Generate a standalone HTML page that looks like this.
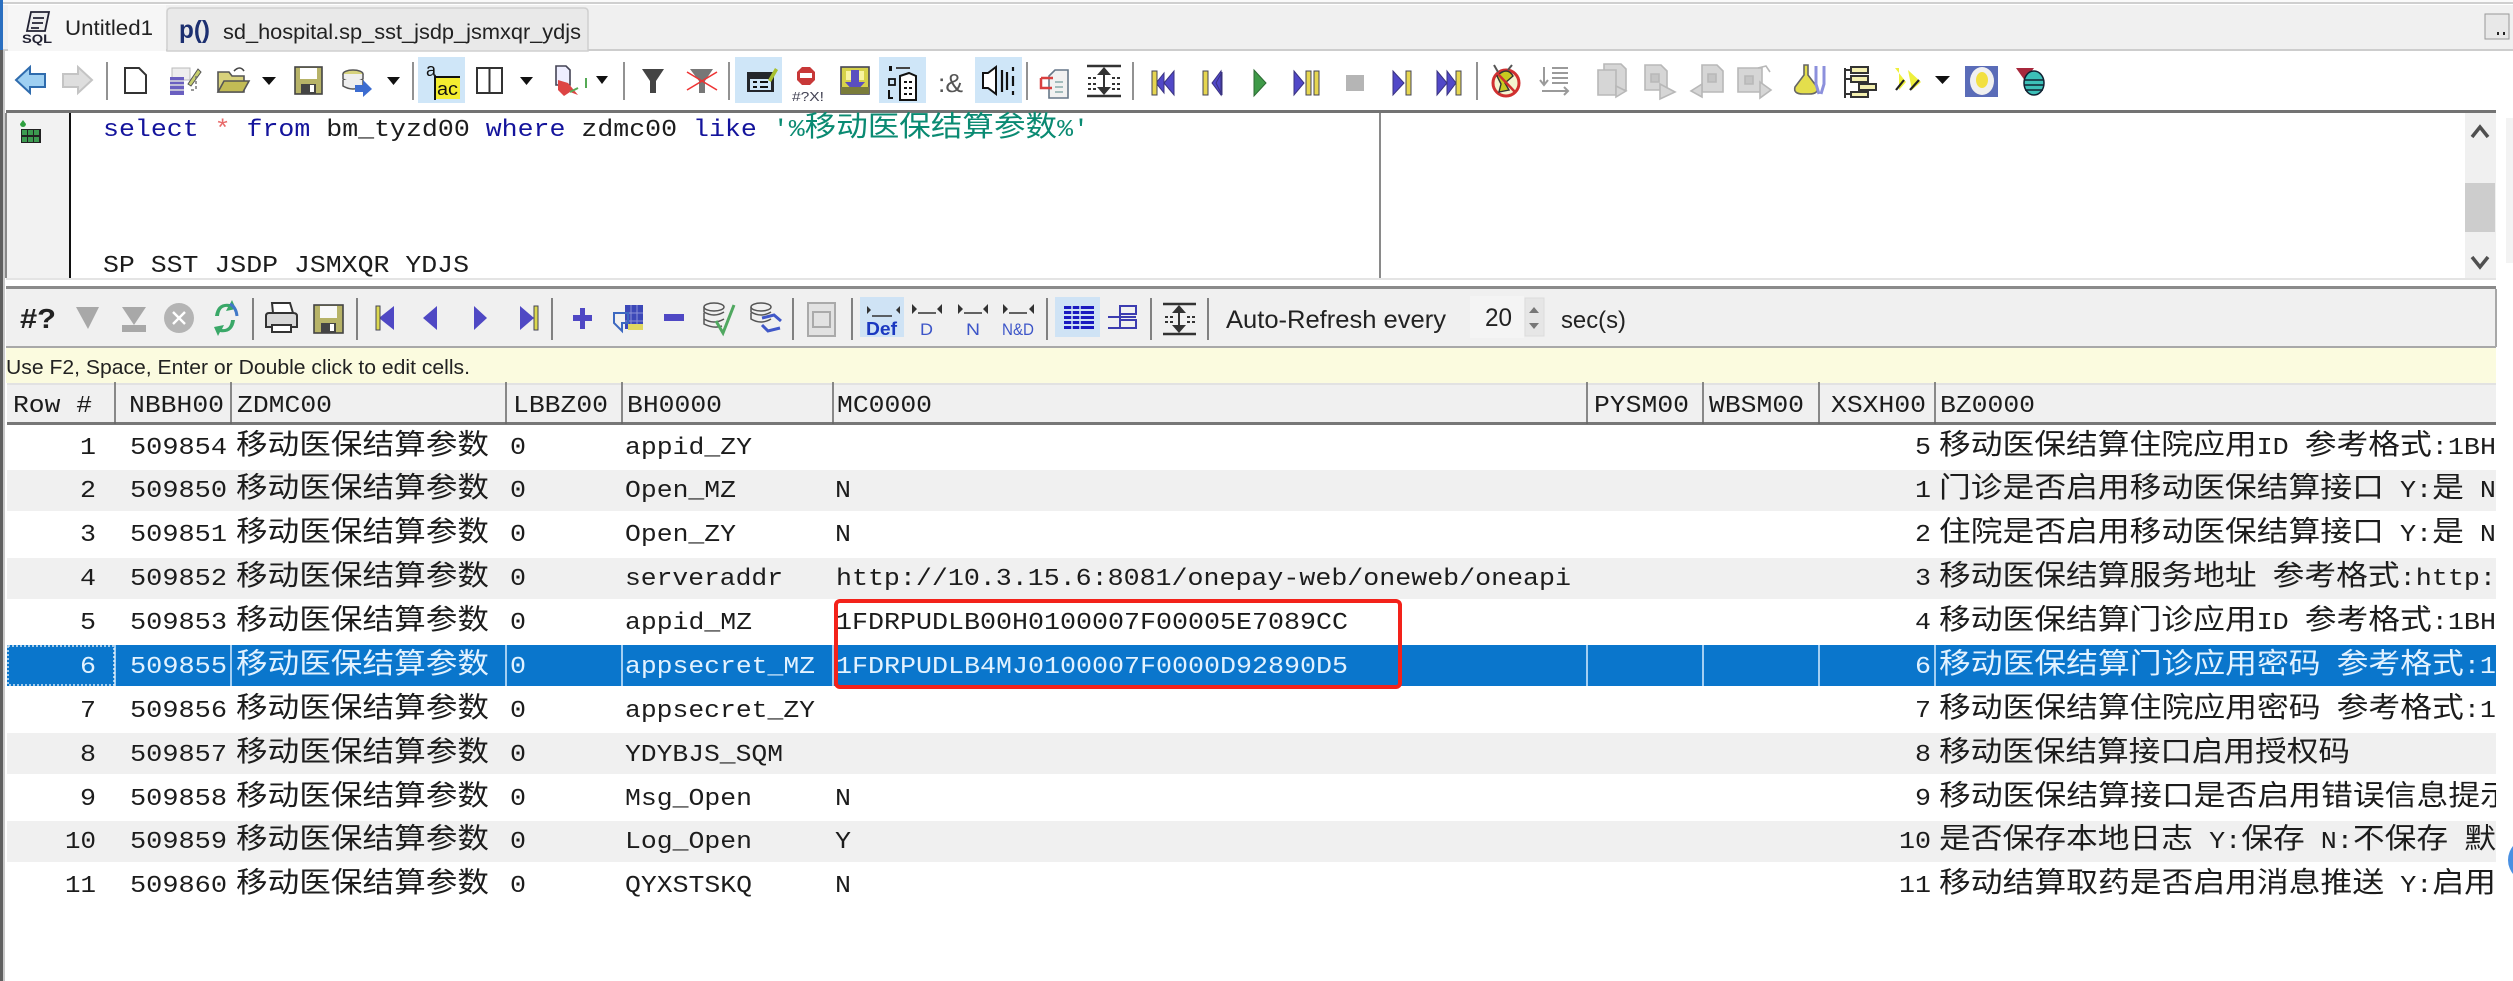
<!DOCTYPE html>
<html><head><meta charset="utf-8"><title>SQLyog</title>
<style>
html,body{margin:0;padding:0;background:#fff;width:2513px;height:981px;overflow:hidden}
svg{display:block}
text{white-space:pre}
.m{font-family:"Liberation Mono","Noto Sans CJK SC",monospace;font-size:24px;fill:#1c1c1c}
.s{font-family:"Liberation Sans","Noto Sans CJK SC",sans-serif;fill:#222}
.c{font-size:28.5px;font-family:"Noto Sans CJK SC",sans-serif}
.w{fill:#e2f2ff}
</style></head><body>
<svg xmlns="http://www.w3.org/2000/svg" width="2513" height="981" viewBox="0 0 2513 981">
<defs><clipPath id="bz"><rect x="1938" y="425" width="558" height="490"/></clipPath></defs>
<rect width="2513" height="981" fill="#fff"/>

<!-- tab bar -->
<rect x="0" y="0" width="2513" height="3" fill="#fafafa"/>
<rect x="0" y="2" width="2513" height="2" fill="#cfcfcf"/>
<rect x="0" y="5" width="2513" height="45" fill="#f0f0f0"/>
<rect x="0" y="49" width="2513" height="2" fill="#cdcdcd"/>
<rect x="8" y="5" width="158" height="46" fill="#f6f6f6"/>
<path d="M167 51V12q0-4 4-4h413q4 0 4 4v39z" fill="#e9e9e9" stroke="#cfcfcf" stroke-width="1.5"/>
<rect x="0" y="0" width="3" height="50" fill="#2a6fc0"/>
<!-- sql icon -->
<g fill="none" stroke="#223" stroke-width="1.8"><path d="M31 12h18l-4 19H27z" fill="#eee"/><path d="M33 18h11M32 23h11M31 28h8"/></g>
<text x="22" y="43" class="s" font-size="12" font-weight="bold" textLength="30" lengthAdjust="spacingAndGlyphs" style="fill:#223">SQL</text>
<text x="65" y="35" class="s" font-size="21" textLength="88" lengthAdjust="spacingAndGlyphs">Untitled1</text>
<text x="179" y="38" class="s" font-size="25" font-weight="bold" textLength="31" lengthAdjust="spacingAndGlyphs" style="fill:#1c2f70">p()</text>
<text x="223" y="39" class="s" font-size="21" textLength="358" lengthAdjust="spacingAndGlyphs">sd_hospital.sp_sst_jsdp_jsmxqr_ydjs</text>
<rect x="2485" y="14" width="24" height="25" fill="#e8e8e8" stroke="#999"/>
<path d="M2497 32h2v3h-2zM2503 32h2v3h-2z" fill="#222"/>

<!-- toolbar 1 active buttons -->
<rect x="418" y="57" width="47" height="46" fill="#cfe6f8"/>
<rect x="735" y="57" width="47" height="46" fill="#cfe6f8"/>
<rect x="879" y="57" width="47" height="46" fill="#cfe6f8"/>
<rect x="975" y="57" width="47" height="46" fill="#cfe6f8"/>
<!-- separators -->
<g stroke="#777" stroke-width="1.6">
<path d="M107 62v38M413 62v38M624 62v38M729 62v38M1027 62v38M1133 62v38M1477 62v38"/>
</g>
<!-- back/forward -->
<path d="M16 80L30 67V74H45V87H30V93z" fill="#9fd0f2" stroke="#2f6cae" stroke-width="2"/>
<path d="M92 80L78 67V74H63V87H78V93z" fill="#dedede" stroke="#c4c4c4" stroke-width="2"/>
<!-- new -->
<path d="M125 68h14l7 7v18h-21z" fill="#fff" stroke="#333" stroke-width="2"/>
<!-- sql file -->
<g><rect x="172" y="68" width="18" height="12" fill="#eee" stroke="#bbb"/><path d="M188 84l10-15 3 3-10 14z" fill="#c8d070" stroke="#555"/>
<rect x="170" y="77" width="14" height="18" fill="#6a5fc0"/><path d="M170 81h14M170 85h14M170 90h14" stroke="#ddd" stroke-width="1.5"/><path d="M196 76v14M191 90h5" fill="none" stroke="#777" stroke-width="1.5" stroke-dasharray="3 2"/></g>
<!-- open -->
<path d="M218 92V72h11l3 4h12v16z" fill="#d8d27c" stroke="#555" stroke-width="1.6"/><path d="M218 92l6-11h25l-6 11z" fill="#c2bb55" stroke="#555" stroke-width="1.6"/><path d="M234 71q6-6 10 0" fill="none" stroke="#444" stroke-width="1.6"/>
<!-- dropdowns -->
<g fill="#111"><path d="M262 77h14l-7 8zM387 77h13l-6.500 8zM520 77h13l-6.500 8zM596 76h12l-6 8z"/><path d="M1935 76h15l-7.500 8z"/></g>
<!-- save -->
<rect x="295" y="67" width="27" height="27" fill="#b7b368" stroke="#444" stroke-width="1.6"/><rect x="300" y="68" width="17" height="11" fill="#fff"/><rect x="301" y="84" width="15" height="10" fill="#444"/><rect x="310" y="85" width="4" height="7" fill="#fff"/>
<!-- db arrow -->
<g fill="#fff" stroke="#555" stroke-width="1.5"><ellipse cx="353" cy="74" rx="10" ry="4" fill="#d6d27e"/><path d="M343 74v5q10 6 20 0v-5" fill="#eee"/><path d="M343 80v6q10 6 20 0v-6" fill="#eee"/></g><path d="M355 85h8v-5l9 9-9 8v-5h-8z" fill="#3c6cd0"/>
<!-- word wrap a/ab -->
<text x="426" y="76" class="s" font-size="18" style="fill:#111">a</text><rect x="434" y="76" width="26" height="2" fill="#111"/><rect x="436" y="78" width="24" height="21" fill="#f4ee30"/><text x="437" y="95" class="s" font-size="18" textLength="21" lengthAdjust="spacingAndGlyphs" style="fill:#111">ac</text><rect x="434" y="78" width="2" height="22" fill="#111"/>
<!-- panel -->
<rect x="477" y="68" width="25" height="25" fill="#fff" stroke="#333" stroke-width="2"/><path d="M489.500 68v25" stroke="#333" stroke-width="2"/>
<!-- export -->
<path d="M556 66h10l4 4v15h-14z" fill="#eef" stroke="#445" stroke-width="1.6"/><path d="M558 80l10 3 10 12-8-3-6 4-6-6z" fill="#d44"/><path d="M570 92l8-4M586 78v10" stroke="#5a5" stroke-width="2"/>
<!-- filters -->
<path d="M642 69h22l-8 12v12h-6V81z" fill="#444"/>
<path d="M690 69h23l-8 12v12h-6V81z" fill="#777"/><path d="M687 72l30 18M717 72l-30 18" stroke="#e33" stroke-width="1.6"/>
<!-- active editor icon -->
<rect x="747" y="72" width="27" height="20" fill="#23262b"/><rect x="750" y="79" width="21" height="11" fill="#cfe6f8"/><path d="M753 82h4M760 82h8M753 87h4M760 87h8" stroke="#111" stroke-width="2"/><path d="M768 80l7-12 3 2-7 12z" fill="#a8c030"/>
<!-- stop #?X! -->
<path d="M802 67h8l5 5v8l-5 5h-8l-5-5v-8z" fill="#c83838"/><rect x="800" y="73" width="12" height="5" fill="#fff"/>
<text x="792" y="101" class="s" font-size="13" textLength="32" lengthAdjust="spacingAndGlyphs" style="fill:#445">#?X!</text>
<!-- down-yellow -->
<rect x="841" y="67" width="28" height="27" fill="#d6d24a" stroke="#445" stroke-width="1.6"/><rect x="846" y="71" width="18" height="9" fill="#f8f4a0"/><path d="M851 70h8v12h6l-10 11-10-11h6z" fill="#5a4ec0"/><rect x="841" y="87" width="28" height="7" fill="#7a7c3a"/>
<!-- active 2 -->
<rect x="889" y="66" width="3" height="5" fill="#111"/><rect x="896" y="67" width="14" height="2" fill="#444"/><rect x="889" y="79" width="6" height="6" fill="none" stroke="#111" stroke-width="1.800"/><path d="M889 90v8h4" fill="none" stroke="#111" stroke-width="2"/>
<path d="M900 76l9-3 7 3v24h-16z" fill="#fff" stroke="#111" stroke-width="2"/><path d="M904 82h8M904 88h8M904 94h8" stroke="#111" stroke-width="2" stroke-dasharray="3 2"/>
<text x="938" y="92" class="s" font-size="26" textLength="25" lengthAdjust="spacingAndGlyphs" style="fill:#555">:&amp;</text>
<!-- speaker -->
<path d="M983 73h5l8-6v27l-8-6h-5z" fill="#fff" stroke="#111" stroke-width="2"/><path d="M1002 70v22M1007 72v18M1013 67v4M1013 76v10M1013 91v4" stroke="#111" stroke-width="2.200" fill="none"/>
<!-- copy -->
<path d="M1055 70h13v28h-19V76z" fill="#f1f1f1" stroke="#678" stroke-width="1.6"/><path d="M1055 82h8M1055 87h8M1055 92h8" stroke="#8aa" stroke-width="1.500"/><path d="M1041 78h12M1041 78v10h11" fill="none" stroke="#d84040" stroke-width="2.500"/>
<!-- expand -->
<path d="M1087 66h34M1087 96h34" stroke="#333" stroke-width="2.500"/><path d="M1104 67l-7 8h14zM1104 95l-7-8h14z" fill="#333"/><path d="M1088 78h8M1112 78h8M1088 84h8M1112 84h8M1088 89h8M1112 89h8" stroke="#333" stroke-width="2" stroke-dasharray="3 2"/><path d="M1104 74v18" stroke="#333" stroke-width="2"/>
<!-- run controls -->
<g fill="#5148c8" stroke="#3a3380">
<path d="M1164 83l10-12v24zM1156 83l8-10v20z"/><path d="M1216 83l6-11v23z M1212 83l9-12v24z"/><path d="M1294 71l10 12-10 12z"/><path d="M1393 71l11 12-11 12z"/><path d="M1437 71l10 12-10 12zM1447 71l9 12-9 12z"/></g>
<g fill="#e6d650" stroke="#445"><rect x="1152" y="71" width="5" height="24"/><rect x="1203" y="71" width="5" height="24"/><rect x="1306" y="71" width="5" height="24"/><rect x="1314" y="71" width="5" height="24"/><rect x="1406" y="71" width="5" height="24"/><rect x="1456" y="71" width="5" height="24"/></g>
<path d="M1254 70l12 13-12 13z" fill="#3f9a48" stroke="#2c6b33"/>
<rect x="1346" y="75" width="18" height="16" fill="#b5b5b5"/>
<!-- bug -->
<circle cx="1506" cy="83" r="13" fill="#f4f4d0" stroke="#d03030" stroke-width="3"/><path d="M1498 72l-4-7M1508 70l4-5" stroke="#555" stroke-width="2"/><path d="M1497 76q10-10 16 0l-8 7 4 7-10 2 2-8z" fill="#c8c820" stroke="#333" stroke-width="1.400"/><path d="M1497 73l18 19" stroke="#d03030" stroke-width="2.500"/>
<!-- list -->
<g stroke="#9a9a9a" stroke-width="2" fill="none"><path d="M1552 68h16M1552 73h16M1552 78h16M1552 83h16"/><path d="M1544 67v17M1540 80l4 5 4-5M1542 91h26M1564 87l4 4-4 4"/></g>
<!-- disabled group -->
<g fill="#d6d6d6" stroke="#b8b8b8" stroke-width="1.600">
<path d="M1604 64h17l5 5v21h-22z"/><path d="M1598 70h18v25h-18z"/><path d="M1616 86l10 5-10 6z"/>
<path d="M1645 65h16l6 6v19h-22z"/><path d="M1660 84l15 8-15 7z"/><path d="M1651 74h8v8h-8z" fill="#c4c4c4"/>
<path d="M1702 65h15l6 6v21h-21z"/><path d="M1702 84l-11 7 11 6z"/><path d="M1708 74h8v8h-8z" fill="#c4c4c4"/>
<path d="M1738 68h24v24h-24z"/><path d="M1760 82l11 8-11 8z"/><path d="M1758 68l8-2 4 6" fill="none"/><path d="M1745 76h8v8h-8z" fill="#c4c4c4"/>
</g>
<!-- flask -->
<path d="M1804 65v10l-9 12q-2 7 8 7h6q10 0 8-7l-9-12V65z" fill="#e4de4c" stroke="#666" stroke-width="1.600"/><path d="M1816 66v18l3 10M1824 66v18l-3 10" stroke="#8c90dc" stroke-width="3" fill="none"/>
<!-- tree -->
<g fill="#f4f0b0" stroke="#333" stroke-width="2"><rect x="1851" y="67" width="17" height="6"/><rect x="1851" y="76" width="17" height="6"/><rect x="1859" y="84" width="17" height="6"/><rect x="1851" y="92" width="17" height="5"/></g><path d="M1845 68v30M1845 70h6M1845 79h6M1845 94h6" stroke="#333" stroke-width="2" fill="none"/>
<!-- chevrons -->
<path d="M1895 68l11 14-7 8v-22zM1908 70l13 12-9 8-4-20z" fill="#eef03c"/><path d="M1896 90l8-10M1910 90l9-10" stroke="#222" stroke-width="2.200"/>
<!-- brain -->
<rect x="1965" y="66" width="33" height="31" fill="#5a6cb8"/><ellipse cx="1982" cy="81" rx="12" ry="14" fill="#f0f0f0"/><ellipse cx="1982" cy="80" rx="6" ry="8" fill="#f2e040"/>
<!-- flag db -->
<path d="M2016 68h18l-8 11 2 6z" fill="#a8283c"/><ellipse cx="2034" cy="83" rx="10" ry="12" fill="#3cc0b8" stroke="#123" stroke-width="1.500"/><path d="M2024 80h20M2024 85h20M2025 90h18" stroke="#123" stroke-width="1.500"/>

<!-- editor -->
<rect x="0" y="50" width="3" height="931" fill="#5f5f5f"/><rect x="3" y="50" width="2" height="931" fill="#c8c8c8"/>
<rect x="6" y="110" width="2490" height="3" fill="#737373"/>
<rect x="7" y="113" width="63" height="165" fill="#f2f2f2"/>
<rect x="5" y="113" width="2" height="165" fill="#888"/>
<rect x="69" y="113" width="2" height="165" fill="#111"/>
<path d="M23 120l3 4a3 3 0 1 1-6 0z" fill="#2fa040"/>
<rect x="21" y="129" width="20" height="14" fill="#222"/><path d="M22 130h5v5h-5zM28 130h5v5h-5zM34 130h5v5h-5zM22 137h5v5h-5zM28 137h5v5h-5zM34 137h5v5h-5z" fill="#3c9a50"/>
<text x="103" y="136" class="m" textLength="986" lengthAdjust="spacingAndGlyphs"><tspan fill="#14149c">select</tspan> <tspan fill="#e86a6a">*</tspan> <tspan fill="#14149c">from</tspan> bm_tyzd00 <tspan fill="#14149c">where</tspan> zdmc00 <tspan fill="#14149c">like</tspan> <tspan fill="#0a8a72">'%</tspan><tspan class="c" fill="#0a8a72">移动医保结算参数</tspan><tspan fill="#0a8a72">%'</tspan></text>
<text x="103" y="272" class="m" textLength="366" lengthAdjust="spacingAndGlyphs">SP SST JSDP JSMXQR YDJS</text>
<rect x="1379" y="113" width="2" height="165" fill="#8a8a8a"/>
<rect x="2465" y="113" width="31" height="165" fill="#f0f0f0"/>
<rect x="2465" y="183" width="30" height="49" fill="#cdcdcd"/>
<path d="M2472 137l8-10 8 10M2472 257l8 10 8-10" fill="none" stroke="#505050" stroke-width="3.500"/>
<rect x="2506" y="118" width="7" height="145" fill="#f3f3f3"/>
<rect x="6" y="278" width="2490" height="2" fill="#e4e4e4"/>

<!-- toolbar 2 -->
<rect x="6" y="286" width="2490" height="3" fill="#8a8a8a"/>
<rect x="6" y="289" width="2490" height="58" fill="#f0f0f0"/>
<rect x="6" y="346" width="2490" height="2" fill="#a8a8a8"/>
<rect x="2495" y="289" width="2" height="58" fill="#a8a8a8"/>
<rect x="860" y="297" width="44" height="40" fill="#cfe3f5"/>
<rect x="1055" y="297" width="45" height="40" fill="#cfe3f5"/>
<g stroke="#666" stroke-width="1.600"><path d="M253 298v42M357 298v42M552 298v42M793 298v42M852 298v42M1047 298v42M1151 298v42M1208 298v42"/></g>
<text x="20" y="328" class="s" font-size="28" font-weight="bold" textLength="36" lengthAdjust="spacingAndGlyphs">#?</text>
<path d="M76 307h23l-11 22z" fill="#a8a8a8"/>
<path d="M122 307h24l-12 18z" fill="#a8a8a8"/><rect x="122" y="325" width="24" height="7" fill="#a8a8a8"/>
<circle cx="179" cy="318" r="15" fill="#b4b4b4"/><path d="M173 312l12 12M185 312l-12 12" stroke="#fff" stroke-width="2.400"/>
<path d="M215 316q2-14 15-12l2-4 4 9-10 2 2-4q-8-1-9 9zM235 320q-2 14-15 12l-2 4-4-9 10-2-2 4q8 1 9-9z" fill="#3aa868"/><path d="M230 304q6 3 7 12" stroke="#4078c8" stroke-width="3" fill="none"/>
<path d="M272 303h18l3 10h-20z" fill="#fff" stroke="#333" stroke-width="2"/><path d="M266 316q0-3 3-3h24q4 0 4 3v11h-31z" fill="#d8d8d8" stroke="#333" stroke-width="2"/><rect x="272" y="325" width="19" height="7" fill="#fff" stroke="#333" stroke-width="2"/>
<rect x="314" y="305" width="29" height="28" fill="#b7b368" stroke="#444" stroke-width="1.600"/><rect x="320" y="306" width="17" height="12" fill="#f8f8f8"/><rect x="321" y="323" width="15" height="10" fill="#444"/><rect x="330" y="324" width="4" height="7" fill="#fff"/>
<g fill="#4f48c4"><path d="M379 318l15-12v24z"/><path d="M423 318l14-12v24z"/><path d="M474 306l13 12-13 12z"/><path d="M520 306l14 12-14 12z"/><path d="M573 315h7v-7h5v7h7v6h-7v8h-5v-8h-7z"/><rect x="664" y="314" width="20" height="7" fill="#4f48c4"/></g>
<g fill="#dcd84e" stroke="#445"><rect x="376" y="306" width="4" height="24"/><rect x="534" y="306" width="4" height="24"/></g>
<rect x="625" y="305" width="18" height="24" fill="#3c48b8"/><path d="M631 305v24M637 305v24M625 313h18M625 321h18" stroke="#8a90d8"/><path d="M614 313h14v10h-6v8l-8-8z" fill="none" stroke="#3c68c0" stroke-width="2"/><rect x="628" y="324" width="15" height="6" fill="#e0d860"/>
<g fill="none" stroke="#555" stroke-width="1.500"><ellipse cx="714" cy="307" rx="10" ry="4"/><path d="M704 307v5q10 6 20 0M704 313v6q10 6 20 0M704 319v5q10 5 18 2"/><ellipse cx="761" cy="307" rx="10" ry="4"/><path d="M751 307v5q10 6 20 0M751 313v6q10 6 20 0"/></g>
<path d="M716 321l7 12 11-28" fill="none" stroke="#50a860" stroke-width="3"/>
<path d="M762 318l12-3 7 6M780 328l-12 3-6-6" fill="none" stroke="#4058c8" stroke-width="3"/>
<g fill="#e2e2e2" stroke="#aaa" stroke-width="2"><rect x="808" y="303" width="27" height="33"/><rect x="813" y="312" width="17" height="15"/></g>
<!-- result modes -->
<g fill="#333"><path d="M867 306l4 4-4 4zM900 306l-4 4 4 4zM912 304l5 5-5 5zM942 304l-5 5 5 5zM958 304l5 5-5 5zM988 304l-5 5 5 5zM1003 304l5 5-5 5zM1034 304l-5 5 5 5z"/><path d="M872 316h20M918 313h18M964 313h18M1009 313h18" stroke="#333" stroke-width="1.500"/></g>
<text x="866" y="335" class="s" font-size="18" font-weight="bold" textLength="31" lengthAdjust="spacingAndGlyphs" style="fill:#1a38c0">Def</text>
<text x="920" y="335" class="s" font-size="17" textLength="13" lengthAdjust="spacingAndGlyphs" style="fill:#3c55c8">D</text>
<text x="966" y="335" class="s" font-size="17" textLength="14" lengthAdjust="spacingAndGlyphs" style="fill:#3c55c8">N</text>
<text x="1002" y="335" class="s" font-size="17" textLength="32" lengthAdjust="spacingAndGlyphs" style="fill:#3c55c8">N&amp;D</text>
<g fill="#1a1ac0"><path d="M1064 306h30v3h-30zM1064 311h30v3h-30zM1064 316h30v3h-30zM1064 321h30v3h-30zM1064 326h30v3h-30z"/></g><path d="M1072 305v25M1080 305v25" stroke="#cfe3f5" stroke-width="1.500"/>
<g fill="none" stroke="#3c3cb0" stroke-width="2"><rect x="1120" y="320" width="16" height="8"/><rect x="1120" y="306" width="16" height="8"/><path d="M1108 317h28M1108 328h12M1120 306v22"/></g>
<path d="M1163 304h33M1163 334h33" stroke="#333" stroke-width="2.500"/><path d="M1179 305l-7 8h14zM1179 333l-7-8h14z" fill="#333"/><path d="M1165 317h8M1187 317h8M1165 322h8M1187 322h8" stroke="#333" stroke-width="2" stroke-dasharray="3 2"/><path d="M1179 312v14" stroke="#333" stroke-width="2"/>
<text x="1226" y="328" class="s" font-size="25" textLength="220" lengthAdjust="spacingAndGlyphs">Auto-Refresh every</text>
<rect x="1470" y="296" width="54" height="42" fill="#f4f4f4"/>
<text x="1485" y="326" class="s" font-size="25" textLength="27" lengthAdjust="spacingAndGlyphs">20</text>
<rect x="1525" y="298" width="19" height="38" fill="#e6e6e6" stroke="#dcdcdc"/>
<path d="M1529 313l5-6 5 6zM1529 323l5 6 5-6z" fill="#777"/>
<text x="1561" y="328" class="s" font-size="24" textLength="65" lengthAdjust="spacingAndGlyphs">sec(s)</text>

<!-- message -->
<rect x="6" y="348" width="2490" height="35" fill="#fbfbdf"/>
<text x="6" y="374" class="s" font-size="20" textLength="464" lengthAdjust="spacingAndGlyphs">Use F2, Space, Enter or Double click to edit cells.</text>

<!-- header -->
<rect x="7" y="384" width="2489" height="39" fill="#f0f0f0"/>
<rect x="7" y="383" width="2489" height="2" fill="#e2e2e2"/>
<rect x="7" y="422" width="2489" height="3" fill="#777"/>
<g stroke="#666" stroke-width="1.500"><path d="M115 382v42M231 382v42M506 382v42M622 382v42M833 382v42M1587 382v42M1703 382v42M1819 382v42M1935 382v42"/></g>
<g class="hd">
<text x="13" y="412" class="m" textLength="79" lengthAdjust="spacingAndGlyphs">Row #</text>
<text x="129" y="412" class="m" textLength="95" lengthAdjust="spacingAndGlyphs">NBBH00</text>
<text x="237" y="412" class="m" textLength="95" lengthAdjust="spacingAndGlyphs">ZDMC00</text>
<text x="513" y="412" class="m" textLength="95" lengthAdjust="spacingAndGlyphs">LBBZ00</text>
<text x="627" y="412" class="m" textLength="95" lengthAdjust="spacingAndGlyphs">BH0000</text>
<text x="837" y="412" class="m" textLength="95" lengthAdjust="spacingAndGlyphs">MC0000</text>
<text x="1594" y="412" class="m" textLength="95" lengthAdjust="spacingAndGlyphs">PYSM00</text>
<text x="1709" y="412" class="m" textLength="95" lengthAdjust="spacingAndGlyphs">WBSM00</text>
<text x="1831" y="412" class="m" textLength="95" lengthAdjust="spacingAndGlyphs">XSXH00</text>
<text x="1940" y="412" class="m" textLength="95" lengthAdjust="spacingAndGlyphs">BZ0000</text>
</g>

<!-- row bands -->
<g fill="#f0f0f0">
<rect x="7" y="470" width="2489" height="41"/>
<rect x="7" y="558" width="2489" height="41"/>
<rect x="7" y="733" width="2489" height="41"/>
<rect x="7" y="821" width="2489" height="41"/>
</g>
<rect x="7" y="645" width="2489" height="41" fill="#0a76cc"/>
<g stroke="#d6ecff" stroke-width="1.500"><path d="M115 645v41M231 645v41M506 645v41M622 645v41M833 645v41M1587 645v41M1703 645v41M1819 645v41M1935 645v41"/></g>
<rect x="8" y="646" width="106" height="39" fill="none" stroke="#d8e8f4" stroke-width="1.500" stroke-dasharray="2 2"/>

<!-- rows -->
<g class="rows">
<text x="80" y="454" class="m" textLength="16" lengthAdjust="spacingAndGlyphs">1</text>
<text x="80" y="497" class="m" textLength="16" lengthAdjust="spacingAndGlyphs">2</text>
<text x="80" y="541" class="m" textLength="16" lengthAdjust="spacingAndGlyphs">3</text>
<text x="80" y="585" class="m" textLength="16" lengthAdjust="spacingAndGlyphs">4</text>
<text x="80" y="629" class="m" textLength="16" lengthAdjust="spacingAndGlyphs">5</text>
<text x="80" y="673" class="m w" textLength="16" lengthAdjust="spacingAndGlyphs">6</text>
<text x="80" y="717" class="m" textLength="16" lengthAdjust="spacingAndGlyphs">7</text>
<text x="80" y="761" class="m" textLength="16" lengthAdjust="spacingAndGlyphs">8</text>
<text x="80" y="805" class="m" textLength="16" lengthAdjust="spacingAndGlyphs">9</text>
<text x="65" y="848" class="m" textLength="31" lengthAdjust="spacingAndGlyphs">10</text>
<text x="65" y="892" class="m" textLength="31" lengthAdjust="spacingAndGlyphs">11</text>

<text x="130" y="454" class="m" textLength="97" lengthAdjust="spacingAndGlyphs">509854</text>
<text x="130" y="497" class="m" textLength="97" lengthAdjust="spacingAndGlyphs">509850</text>
<text x="130" y="541" class="m" textLength="97" lengthAdjust="spacingAndGlyphs">509851</text>
<text x="130" y="585" class="m" textLength="97" lengthAdjust="spacingAndGlyphs">509852</text>
<text x="130" y="629" class="m" textLength="97" lengthAdjust="spacingAndGlyphs">509853</text>
<text x="130" y="673" class="m w" textLength="97" lengthAdjust="spacingAndGlyphs">509855</text>
<text x="130" y="717" class="m" textLength="97" lengthAdjust="spacingAndGlyphs">509856</text>
<text x="130" y="761" class="m" textLength="97" lengthAdjust="spacingAndGlyphs">509857</text>
<text x="130" y="805" class="m" textLength="97" lengthAdjust="spacingAndGlyphs">509858</text>
<text x="130" y="848" class="m" textLength="97" lengthAdjust="spacingAndGlyphs">509859</text>
<text x="130" y="892" class="m" textLength="97" lengthAdjust="spacingAndGlyphs">509860</text>

<text x="236" y="454" class="m c" textLength="253" lengthAdjust="spacingAndGlyphs">移动医保结算参数</text>
<text x="236" y="497" class="m c" textLength="253" lengthAdjust="spacingAndGlyphs">移动医保结算参数</text>
<text x="236" y="541" class="m c" textLength="253" lengthAdjust="spacingAndGlyphs">移动医保结算参数</text>
<text x="236" y="585" class="m c" textLength="253" lengthAdjust="spacingAndGlyphs">移动医保结算参数</text>
<text x="236" y="629" class="m c" textLength="253" lengthAdjust="spacingAndGlyphs">移动医保结算参数</text>
<text x="236" y="673" class="m c w" textLength="253" lengthAdjust="spacingAndGlyphs">移动医保结算参数</text>
<text x="236" y="717" class="m c" textLength="253" lengthAdjust="spacingAndGlyphs">移动医保结算参数</text>
<text x="236" y="761" class="m c" textLength="253" lengthAdjust="spacingAndGlyphs">移动医保结算参数</text>
<text x="236" y="805" class="m c" textLength="253" lengthAdjust="spacingAndGlyphs">移动医保结算参数</text>
<text x="236" y="848" class="m c" textLength="253" lengthAdjust="spacingAndGlyphs">移动医保结算参数</text>
<text x="236" y="892" class="m c" textLength="253" lengthAdjust="spacingAndGlyphs">移动医保结算参数</text>

<text x="510" y="454" class="m" textLength="16" lengthAdjust="spacingAndGlyphs">0</text>
<text x="510" y="497" class="m" textLength="16" lengthAdjust="spacingAndGlyphs">0</text>
<text x="510" y="541" class="m" textLength="16" lengthAdjust="spacingAndGlyphs">0</text>
<text x="510" y="585" class="m" textLength="16" lengthAdjust="spacingAndGlyphs">0</text>
<text x="510" y="629" class="m" textLength="16" lengthAdjust="spacingAndGlyphs">0</text>
<text x="510" y="673" class="m w" textLength="16" lengthAdjust="spacingAndGlyphs">0</text>
<text x="510" y="717" class="m" textLength="16" lengthAdjust="spacingAndGlyphs">0</text>
<text x="510" y="761" class="m" textLength="16" lengthAdjust="spacingAndGlyphs">0</text>
<text x="510" y="805" class="m" textLength="16" lengthAdjust="spacingAndGlyphs">0</text>
<text x="510" y="848" class="m" textLength="16" lengthAdjust="spacingAndGlyphs">0</text>
<text x="510" y="892" class="m" textLength="16" lengthAdjust="spacingAndGlyphs">0</text>

<text x="625" y="454" class="m" textLength="127" lengthAdjust="spacingAndGlyphs">appid_ZY</text>
<text x="625" y="497" class="m" textLength="111" lengthAdjust="spacingAndGlyphs">Open_MZ</text>
<text x="625" y="541" class="m" textLength="111" lengthAdjust="spacingAndGlyphs">Open_ZY</text>
<text x="625" y="585" class="m" textLength="158" lengthAdjust="spacingAndGlyphs">serveraddr</text>
<text x="625" y="629" class="m" textLength="127" lengthAdjust="spacingAndGlyphs">appid_MZ</text>
<text x="625" y="673" class="m w" textLength="190" lengthAdjust="spacingAndGlyphs">appsecret_MZ</text>
<text x="625" y="717" class="m" textLength="190" lengthAdjust="spacingAndGlyphs">appsecret_ZY</text>
<text x="625" y="761" class="m" textLength="158" lengthAdjust="spacingAndGlyphs">YDYBJS_SQM</text>
<text x="625" y="805" class="m" textLength="127" lengthAdjust="spacingAndGlyphs">Msg_Open</text>
<text x="625" y="848" class="m" textLength="127" lengthAdjust="spacingAndGlyphs">Log_Open</text>
<text x="625" y="892" class="m" textLength="127" lengthAdjust="spacingAndGlyphs">QYXSTSKQ</text>

<text x="835" y="497" class="m" textLength="16" lengthAdjust="spacingAndGlyphs">N</text>
<text x="835" y="541" class="m" textLength="16" lengthAdjust="spacingAndGlyphs">N</text>
<text x="836" y="585" class="m" textLength="735" lengthAdjust="spacingAndGlyphs">http://10.3.15.6:8081/onepay-web/oneweb/oneapi</text>
<text x="836" y="629" class="m" textLength="512" lengthAdjust="spacingAndGlyphs">1FDRPUDLB00H0100007F00005E7089CC</text>
<text x="836" y="673" class="m w" textLength="512" lengthAdjust="spacingAndGlyphs">1FDRPUDLB4MJ0100007F0000D92890D5</text>
<text x="835" y="805" class="m" textLength="16" lengthAdjust="spacingAndGlyphs">N</text>
<text x="835" y="848" class="m" textLength="16" lengthAdjust="spacingAndGlyphs">Y</text>
<text x="835" y="892" class="m" textLength="16" lengthAdjust="spacingAndGlyphs">N</text>

<text x="1915" y="454" class="m" textLength="16" lengthAdjust="spacingAndGlyphs">5</text>
<text x="1915" y="497" class="m" textLength="16" lengthAdjust="spacingAndGlyphs">1</text>
<text x="1915" y="541" class="m" textLength="16" lengthAdjust="spacingAndGlyphs">2</text>
<text x="1915" y="585" class="m" textLength="16" lengthAdjust="spacingAndGlyphs">3</text>
<text x="1915" y="629" class="m" textLength="16" lengthAdjust="spacingAndGlyphs">4</text>
<text x="1915" y="673" class="m w" textLength="16" lengthAdjust="spacingAndGlyphs">6</text>
<text x="1915" y="717" class="m" textLength="16" lengthAdjust="spacingAndGlyphs">7</text>
<text x="1915" y="761" class="m" textLength="16" lengthAdjust="spacingAndGlyphs">8</text>
<text x="1915" y="805" class="m" textLength="16" lengthAdjust="spacingAndGlyphs">9</text>
<text x="1899" y="848" class="m" textLength="32" lengthAdjust="spacingAndGlyphs">10</text>
<text x="1899" y="892" class="m" textLength="32" lengthAdjust="spacingAndGlyphs">11</text>

<g clip-path="url(#bz)">
<text x="1939" y="454" class="m" textLength="557" lengthAdjust="spacingAndGlyphs"><tspan class="c">移动医保结算住院应用</tspan>ID <tspan class="c">参考格式</tspan>:1BH</text>
<text x="1939" y="497" class="m" textLength="557" lengthAdjust="spacingAndGlyphs"><tspan class="c">门诊是否启用移动医保结算接口</tspan> Y:<tspan class="c">是</tspan> N</text>
<text x="1939" y="541" class="m" textLength="557" lengthAdjust="spacingAndGlyphs"><tspan class="c">住院是否启用移动医保结算接口</tspan> Y:<tspan class="c">是</tspan> N</text>
<text x="1939" y="585" class="m" textLength="557" lengthAdjust="spacingAndGlyphs"><tspan class="c">移动医保结算服务地址</tspan> <tspan class="c">参考格式</tspan>:http:</text>
<text x="1939" y="629" class="m" textLength="557" lengthAdjust="spacingAndGlyphs"><tspan class="c">移动医保结算门诊应用</tspan>ID <tspan class="c">参考格式</tspan>:1BH</text>
<text x="1939" y="673" class="m w" textLength="557" lengthAdjust="spacingAndGlyphs"><tspan class="c">移动医保结算门诊应用密码</tspan> <tspan class="c">参考格式</tspan>:1</text>
<text x="1939" y="717" class="m" textLength="557" lengthAdjust="spacingAndGlyphs"><tspan class="c">移动医保结算住院应用密码</tspan> <tspan class="c">参考格式</tspan>:1</text>
<text x="1939" y="761" class="m c" textLength="411" lengthAdjust="spacingAndGlyphs">移动医保结算接口启用授权码</text>
<text x="1939" y="805" class="m c" textLength="573" lengthAdjust="spacingAndGlyphs">移动医保结算接口是否启用错误信息提示</text>
<text x="1939" y="848" class="m" textLength="557" lengthAdjust="spacingAndGlyphs"><tspan class="c">是否保存本地日志</tspan> Y:<tspan class="c">保存</tspan> N:<tspan class="c">不保存</tspan> <tspan class="c">默</tspan></text>
<text x="1939" y="892" class="m" textLength="557" lengthAdjust="spacingAndGlyphs"><tspan class="c">移动结算取药是否启用消息推送</tspan> Y:<tspan class="c">启用</tspan></text>
</g>
</g>

<!-- red box -->
<rect x="836" y="601" width="564" height="86" rx="4" fill="none" stroke="#f3221a" stroke-width="4"/>
<!-- blue blob -->
<circle cx="2530" cy="860" r="22" fill="#4a90e2"/>
</svg>
</body></html>
